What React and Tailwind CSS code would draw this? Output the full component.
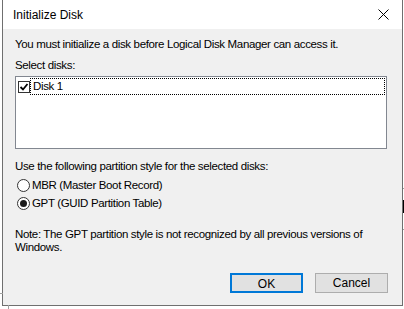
import React, { useState } from "react";

// Windows "Initialize Disk" dialog from Disk Management.

const FONT = { fontFamily: '"Liberation Sans", Arial, sans-serif' };

function CheckBox({ checked }) {
  return (
    <span className="w-[12px] h-[12px] border border-[#333333] bg-white flex items-center justify-center flex-shrink-0">
      {checked && (
        <svg width="10" height="10" viewBox="0 0 10 10">
          <path d="M1.5 5 L4 7.5 L8.5 2" fill="none" stroke="#000" strokeWidth="1.8" />
        </svg>
      )}
    </span>
  );
}

function Radio({ checked, label, onClick }) {
  return (
    <button type="button" onClick={onClick} className="flex items-center h-[18px] pl-[14px] text-left">
      <span className="w-[13px] h-[13px] rounded-full border border-[#333333] bg-white flex items-center justify-center flex-shrink-0">
        {checked && <span className="w-[7px] h-[7px] rounded-full bg-[#1a1a1a]" />}
      </span>
      <span className="ml-[2px] leading-[15px] text-black">{label}</span>
    </button>
  );
}

export default function App() {
  const [style, setStyle] = useState("gpt");

  return (
    <div className="relative w-[404px] h-[309px] bg-white overflow-hidden" style={FONT}>
      {/* bits of the window behind the dialog */}
      <div className="absolute left-0 top-[293px] w-[3px] h-px bg-[#a0a0a0]" />
      <div className="absolute left-[8px] top-[305px] w-px h-[4px] bg-[#a0a0a0]" />
      <div className="absolute left-[403px] top-[188px] w-px h-px bg-[#a0a0a0]" />
      <div className="absolute left-[403px] top-[200px] w-px h-[13px] bg-black" />
      <div className="absolute left-[403px] top-[229px] w-px h-px bg-[#a0a0a0]" />

      <div className="ml-[2px] w-[401px] h-[306px] border-x border-b border-[#6f6f6f] flex flex-col text-[11.5px] tracking-[-0.35px]">
        {/* Title bar */}
        <div className="h-[29px] bg-white flex items-center justify-between pl-[10px] pr-[10px]">
          <span className="text-[12px] tracking-normal text-black">Initialize Disk</span>
          <svg width="11" height="11" viewBox="0 0 11 11" className="mr-[3px]">
            <path d="M0.5 0.5 L10.5 10.5 M10.5 0.5 L0.5 10.5" stroke="#000" strokeWidth="1" />
          </svg>
        </div>

        {/* Body */}
        <div className="flex-1 bg-[#f0f0f0] flex flex-col px-[12px] pt-[8px] text-black">
          <p className="leading-[15px]">
            You must initialize a disk before Logical Disk Manager can access it.
          </p>
          <p className="leading-[15px] mt-[6px]">Select disks:</p>

          <div className="mt-[3px] h-[73px] w-[372px] border border-[#828790] bg-white p-px">
            <div className="flex items-center h-[17px]">
              <span className="ml-px">
                <CheckBox checked />
              </span>
              <div className="flex-1 h-[17px] border border-dotted border-black flex items-center pl-[2px]">
                <span className="leading-[15px]">Disk 1</span>
              </div>
            </div>
          </div>

          <p className="leading-[15px] mt-[10px]">
            Use the following partition style for the selected disks:
          </p>
          <div className="flex flex-col -ml-[12px] mt-[2px]">
            <Radio label="MBR (Master Boot Record)" checked={style === "mbr"} onClick={() => setStyle("mbr")} />
            <Radio label="GPT (GUID Partition Table)" checked={style === "gpt"} onClick={() => setStyle("gpt")} />
          </div>

          <p className="leading-[13px] mt-[16px] w-[360px]">
            Note: The GPT partition style is not recognized by all previous versions of Windows.
          </p>

          <div className="flex justify-end gap-[12px] mt-[19px] pr-[2px]">
            <button type="button" className="w-[73px] h-[20px] border-2 border-[#0078d7] bg-[#e1e1e1] text-[12px] tracking-normal text-black">
              OK
            </button>
            <button type="button" className="w-[73px] h-[20px] border border-[#adadad] bg-[#e1e1e1] text-[12px] tracking-normal text-black">
              Cancel
            </button>
          </div>
        </div>
      </div>
    </div>
  );
}
